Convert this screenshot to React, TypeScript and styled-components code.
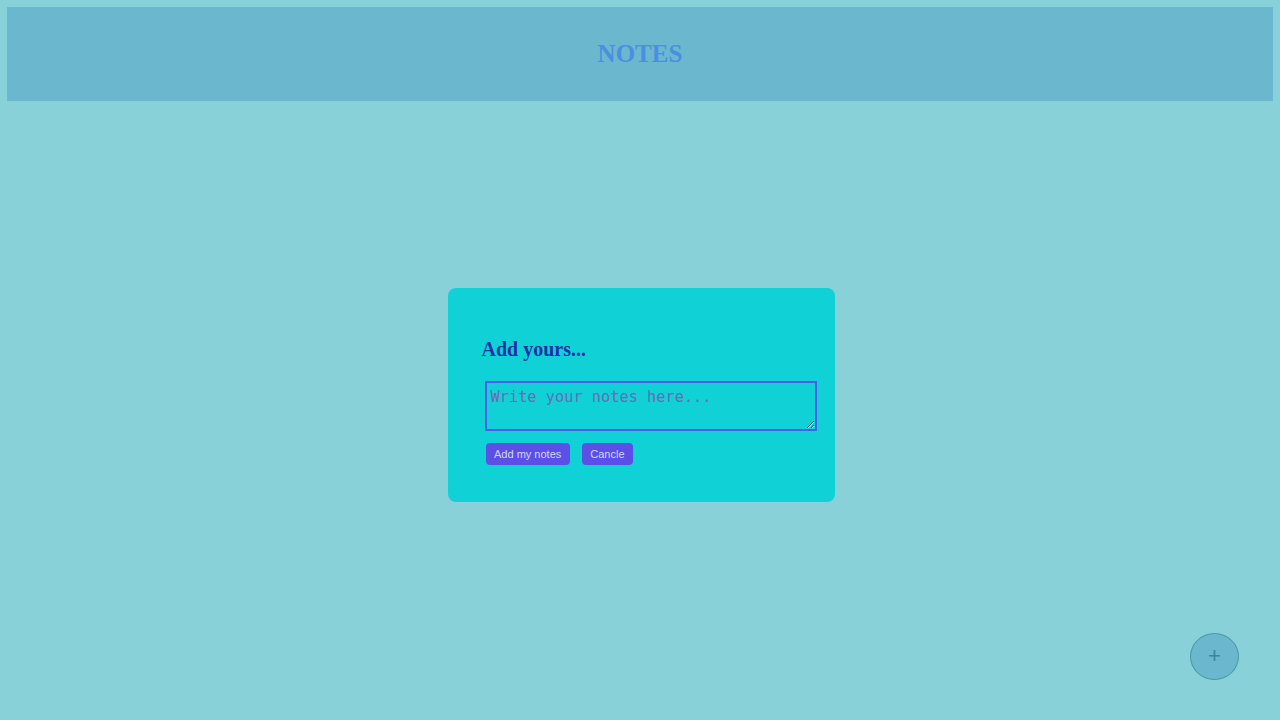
import React from "react";
import styled, { createGlobalStyle } from "styled-components";

const Global = createGlobalStyle`
  html, body { margin: 0; padding: 0; }
  body {
    background: #88d1d8;
    font-family: "Liberation Serif", serif;
    min-height: 720px;
  }
`;

const Page = styled.div`
  padding: 7px;
  min-height: 706px;
  display: flex;
  flex-direction: column;
`;

const Header = styled.header`
  height: 94px;
  background: #6bb7ce;
  display: flex;
  align-items: center;
  justify-content: center;
`;

const Title = styled.h1`
  margin: 0;
  font-family: "Liberation Serif", serif;
  font-size: 25px;
  font-weight: bold;
  color: #4a8fe0;
  padding-bottom: 1px;
`;

const Main = styled.main`
  display: flex;
  justify-content: center;
  padding-top: 187px;
  padding-left: 2px;
`;

const Card = styled.section`
  width: 387px;
  box-sizing: border-box;
  background: #10d1d6;
  border-radius: 8px;
  padding: 50px 18px 37px 34px;
  display: flex;
  flex-direction: column;
`;

const Heading = styled.h3`
  margin: 0 0 20px 0;
  font-family: "Liberation Serif", serif;
  font-size: 20px;
  font-weight: bold;
  color: #1b33a6;
  line-height: 23px;
`;

const NoteInput = styled.textarea`
  margin-left: 3px;
  width: 332px;
  height: 50px;
  box-sizing: border-box;
  background: transparent;
  border: 2px solid #4a5ee6;
  padding: 6px 4px 2px 4px;
  font-family: "DejaVu Sans Mono", monospace;
  font-size: 15.3px;
  line-height: 17px;
  color: #2a2a80;
  outline: none;
  &::placeholder { color: #6a6bb5; }
`;

const Actions = styled.div`
  margin-top: 12px;
  margin-left: 4px;
  display: flex;
  gap: 12px;
`;

const Button = styled.button`
  height: 22px;
  padding: 0 8.5px;
  border: none;
  border-radius: 4px;
  background: #5b4fe8;
  color: #d6d6f6;
  font-family: "Liberation Sans", Arial, sans-serif;
  font-size: 11px;
  cursor: pointer;
`;

const Fab = styled.button`
  position: fixed;
  right: 41px;
  bottom: 40px;
  width: 49px;
  height: 47px;
  border-radius: 50%;
  background: #6bb7ce;
  border: 1px solid #4a98a6;
  color: #3a8797;
  font-family: "Liberation Sans", Arial, sans-serif;
  font-size: 22px;
  line-height: 1;
  display: flex;
  align-items: center;
  justify-content: center;
  padding: 0 0 1px 0;
  cursor: pointer;
`;

export default function App() {
  return (
    <>
      <Global />
      <Page>
        <Header>
          <Title>NOTES</Title>
        </Header>
        <Main>
          <Card>
            <Heading>Add yours...</Heading>
            <NoteInput placeholder="Write your notes here..." />
            <Actions>
              <Button>Add my notes</Button>
              <Button>Cancle</Button>
            </Actions>
          </Card>
        </Main>
      </Page>
      <Fab>+</Fab>
    </>
  );
}
